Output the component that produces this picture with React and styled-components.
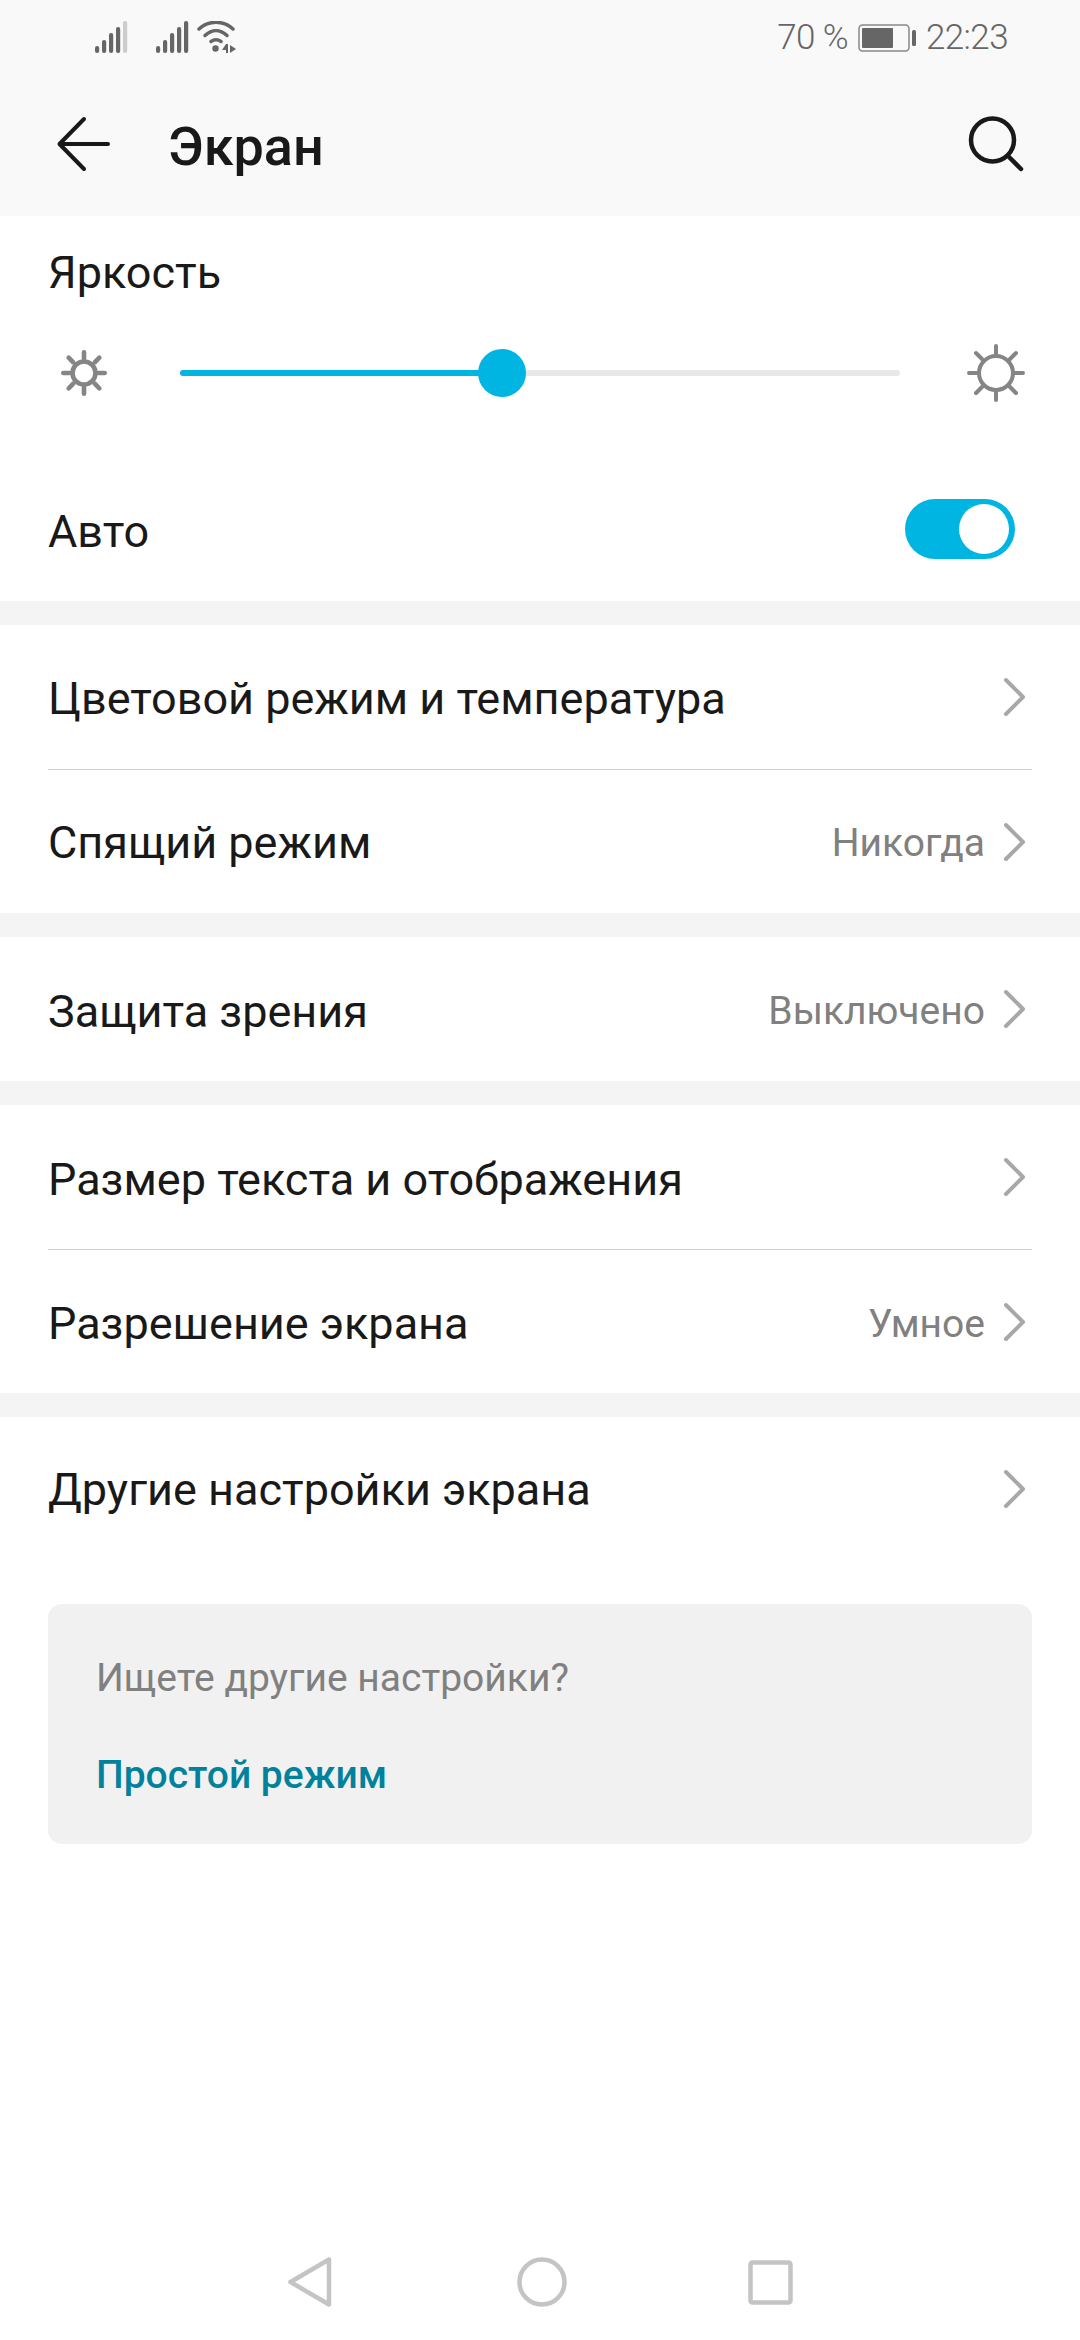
import React from "react";
import styled, { createGlobalStyle } from "styled-components";

const Global = createGlobalStyle`
  html, body { margin: 0; padding: 0; background: #fff; }
  * { box-sizing: border-box; }
`;

const Screen = styled.div`
  width: 1080px;
  height: 2340px;
  background: #fff;
  display: flex;
  flex-direction: column;
  font-family: Roboto, "Noto Sans", sans-serif;
  color: #191919;
  overflow: hidden;
`;
const Header = styled.header`
  background: #f9f9f9;
  height: 216px;
  flex: none;
  display: flex;
  flex-direction: column;
`;
const StatusBar = styled.div`
  height: 72px;
  padding: 18px 72px 0 95px;
  display: flex;
  align-items: flex-start;
  color: #666;
  font-size: 35px;
  font-weight: 300;
  letter-spacing: -0.6px;
  line-height: 38px;
`;
const StatusLeft = styled.div`
  display: flex;
  align-items: flex-start;
  flex: 1;
  padding-top: 3px;
`;
const StatusRight = styled.div`
  display: flex;
  align-items: center;
  gap: 10px;
  padding-top: 1px;
`;
const Toolbar = styled.div`
  flex: 1;
  display: flex;
  align-items: center;
  padding: 0 56px;
`;
const Title = styled.h1`
  margin: 0 0 0 56px;
  padding-top: 6px;
  flex: 1;
  font-size: 54px;
  font-weight: 500;
  line-height: 60px;
`;
const Group = styled.section`
  background: #fff;
  & + & { border-top: 24px solid #f4f4f4; }
`;
const BrightnessLabel = styled.div`
  font-size: 45px;
  line-height: 50px;
  padding: 32px 48px 0;
`;
const SliderRow = styled.div`
  display: flex;
  align-items: center;
  height: 72px;
  margin: 39px 0 52px;
  padding: 0 54px 0 61px;
`;
const Track = styled.div`
  position: relative;
  flex: 1;
  height: 6px;
  margin: 0 66px 0 73px;
  border-radius: 3px;
  background: #e8e8e8;
`;
const Fill = styled.div`
  height: 100%;
  border-radius: 3px;
  background: #00b5e2;
`;
const Thumb = styled.div`
  position: absolute;
  top: 50%;
  width: 48px;
  height: 48px;
  border-radius: 50%;
  background: #00b5e2;
  transform: translate(-50%, -50%);
`;
const Row = styled.div`
  height: ${(p) => p.$h || 144}px;
  margin: 0 48px;
  display: flex;
  align-items: center;
  font-size: 45px;
  border-bottom: ${(p) => (p.$divider ? "1px solid #cfcfcf" : "none")};
`;
const RowLabel = styled.span`
  flex: 1;
  padding-top: ${(p) => p.$nudge || 0}px;
`;
const RowValue = styled.span`
  color: #808080;
  font-size: 39px;
  margin-right: 16px;
  padding-top: ${(p) => p.$nudge || 0}px;
`;
const Switch = styled.div`
  width: 110px;
  height: 60px;
  border-radius: 30px;
  background: #00b5e2;
  margin: -4px 17px 0 0;
  padding: 5px 6px;
  display: flex;
  justify-content: flex-end;
`;
const Knob = styled.div`
  width: 50px;
  height: 50px;
  border-radius: 50%;
  background: #fff;
`;
const Card = styled.div`
  margin: 43px 48px 0;
  height: 240px;
  border-radius: 14px;
  background: #f1f1f1;
  padding: 50px 48px 0;
`;
const CardText = styled.div`
  font-size: 39px;
  line-height: 48px;
  color: #808080;
`;
const CardLink = styled.div`
  margin-top: 49px;
  font-size: 39px;
  line-height: 48px;
  font-weight: 500;
  color: #00829e;
`;
const NavBar = styled.nav`
  margin-top: auto;
  height: 120px;
  flex: none;
  display: flex;
  justify-content: center;
  align-items: center;
  gap: 181px;
  padding-top: 4px;
`;
const RowChevron = styled.span`
  display: flex;
  margin-right: 4px;
`;

const Bars = ({ dim }) => (
  <svg width={dim ? 61 : 41} height="32" viewBox={`0 0 ${dim ? 61 : 41} 32`} fill="#666">
    <rect x="0" y="25" width="4.200" height="7" rx="2.100" />
    <rect x="7" y="19" width="4.200" height="13" rx="2" />
    <rect x="14" y="12" width="4.200" height="20" rx="2" />
    <rect x="21" y="6" width="4.200" height="26" rx="2" />
    <rect x="28" y="0" width="4.200" height="32" rx="2" fill={dim ? "#ccc" : "#666"} />
  </svg>
);
const Wifi = () => (
  <svg width="40" height="32" viewBox="0 0 40 32" fill="none" stroke="#666" strokeWidth="3.500" strokeLinecap="round">
    <path d="M2 8C12 -1 26 -1 36 8" />
    <path d="M8 14.500C15 8 23 8 30 14.500" />
    <path d="M14 20.500C17 18.500 21 18.500 24 20.500" />
    <circle cx="18.500" cy="27.500" r="3.200" fill="#666" stroke="none" />
    <path d="M29 23L25 29H29V32H31V23Z" stroke="none" fill="#666" />
    <path d="M33 24L39 28L33 32Z" stroke="none" fill="#666" />
  </svg>
);
const Battery = () => (
  <svg width="58" height="28" viewBox="0 0 58 28">
    <rect x="1" y="1" width="50" height="26" rx="3.500" fill="none" stroke="#888" strokeWidth="1.500" />
    <rect x="4" y="4" width="31" height="20" rx="1" fill="#666" />
    <rect x="54" y="6" width="4" height="16" rx="1.500" fill="#666" />
  </svg>
);
const Back = () => (
  <svg width="56" height="56" viewBox="0 0 56 56" fill="none" stroke="#191919" strokeWidth="4" strokeLinecap="round" strokeLinejoin="round">
    <path d="M52 28H3.500M28 3L3.500 28L28 53" />
  </svg>
);
const Search = () => (
  <svg width="56" height="56" viewBox="0 0 56 56" fill="none" stroke="#191919" strokeWidth="4.500" strokeLinecap="round">
    <circle cx="24.500" cy="24" r="21.500" />
    <path d="M40 40L53 53" />
  </svg>
);
const Sun = ({ size, ring, weight }) => (
  <svg width={size} height={size} viewBox="0 0 60 60" fill="none" stroke="#858585" strokeWidth={weight} strokeLinecap="round">
    <circle cx="30" cy="30" r={ring} />
    <path d="M30 3V11M30 49V57M3 30H11M49 30H57M10 10L16 16M44 44L50 50M50 10L44 16M16 44L10 50" />
  </svg>
);
const Chevron = () => (
  <svg width="27" height="40" viewBox="0 0 27 40" fill="none" stroke="#a8a8a8" strokeWidth="4" strokeLinecap="round" strokeLinejoin="round">
    <path d="M5 3L22 20L5 37" />
  </svg>
);
const NavBack = () => (
  <svg width="48" height="50" viewBox="0 0 48 50" fill="none" stroke="#c4c4c4" strokeWidth="4.500" strokeLinejoin="round">
    <path d="M41 2.500V47.500L2.500 25Z" />
  </svg>
);
const NavHome = () => (
  <svg width="50" height="50" viewBox="0 0 50 50" fill="none" stroke="#c4c4c4" strokeWidth="4.500">
    <circle cx="25" cy="25" r="22.500" />
  </svg>
);
const NavSquare = () => (
  <svg width="45" height="45" viewBox="0 0 45 45" fill="none" stroke="#c4c4c4" strokeWidth="4.500" strokeLinejoin="round">
    <rect x="2.500" y="2.500" width="40" height="40" rx="2" />
  </svg>
);

const SettingRow = ({ label, value, divider, h, nudge }) => (
  <Row $divider={divider} $h={h}>
    <RowLabel $nudge={nudge}>{label}</RowLabel>
    {value && <RowValue $nudge={nudge}>{value}</RowValue>}
    <RowChevron><Chevron /></RowChevron>
  </Row>
);

export default function App() {
  return (
    <Screen>
      <Global />
      <Header>
        <StatusBar>
          <StatusLeft>
            <Bars dim />
            <Bars />
            <Wifi />
          </StatusLeft>
          <StatusRight>
            <span>70 %</span>
            <Battery />
            <span>22:23</span>
          </StatusRight>
        </StatusBar>
        <Toolbar>
          <Back />
          <Title>Экран</Title>
          <Search />
        </Toolbar>
      </Header>
      <Group>
        <BrightnessLabel>Яркость</BrightnessLabel>
        <SliderRow>
          <Sun size={46} ring={15} weight={6} />
          <Track>
            <Fill style={{ width: "44.7%" }} />
            <Thumb style={{ left: "44.7%" }} />
          </Track>
          <Sun size={60} ring={17} weight={4} />
        </SliderRow>
        <Row $h={140}>
          <RowLabel>Авто</RowLabel>
          <Switch><Knob /></Switch>
        </Row>
      </Group>
      <Group>
        <SettingRow label="Цветовой режим и температура" divider h={145} nudge={3} />
        <SettingRow label="Спящий режим" value="Никогда" h={143} nudge={2} />
      </Group>
      <Group>
        <SettingRow label="Защита зрения" value="Выключено" nudge={4} />
      </Group>
      <Group>
        <SettingRow label="Размер текста и отображения" divider h={145} nudge={5} />
        <SettingRow label="Разрешение экрана" value="Умное" h={143} nudge={4} />
      </Group>
      <Group>
        <SettingRow label="Другие настройки экрана" nudge={0} />
      </Group>
      <Card>
        <CardText>Ищете другие настройки?</CardText>
        <CardLink>Простой режим</CardLink>
      </Card>
      <NavBar>
        <NavBack />
        <NavHome />
        <NavSquare />
      </NavBar>
    </Screen>
  );
}
